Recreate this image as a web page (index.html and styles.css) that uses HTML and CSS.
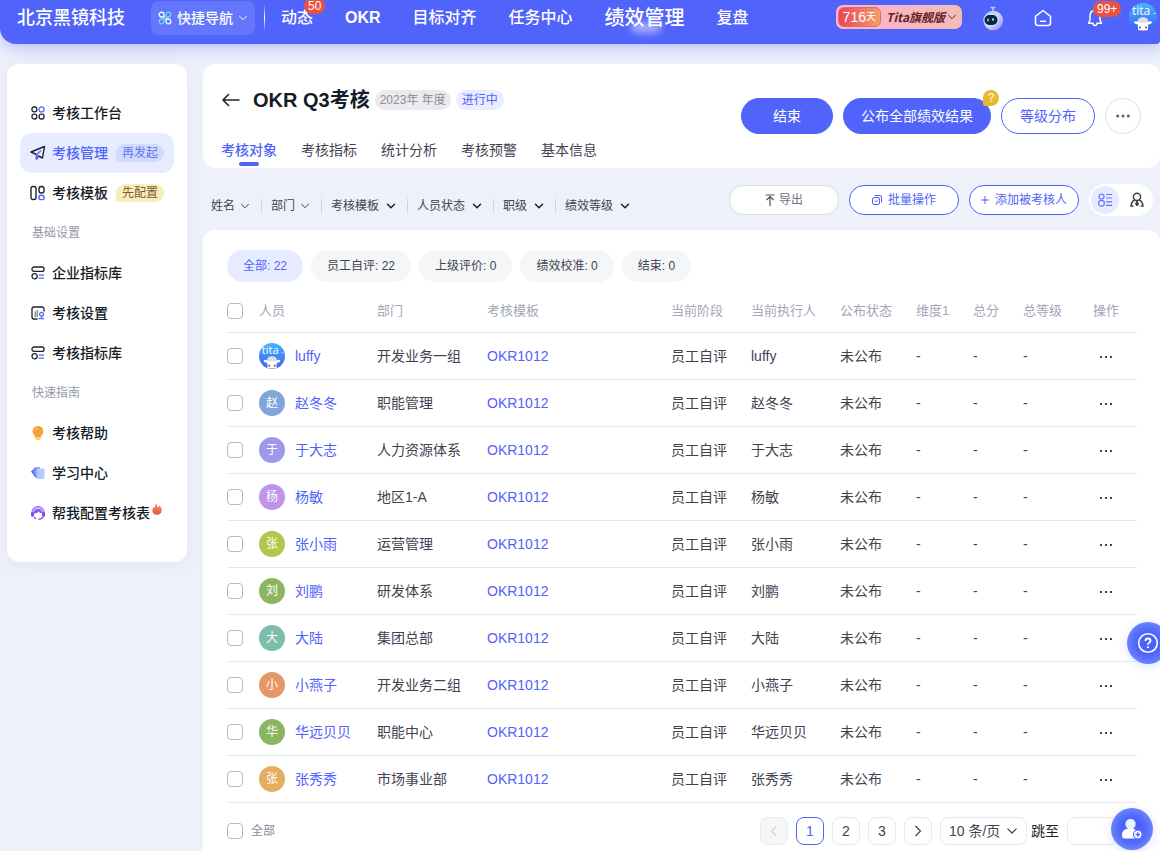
FILE: index.html
```html
<!DOCTYPE html>
<html lang="zh-CN">
<head>
<meta charset="utf-8">
<title>OKR Q3考核</title>
<link rel="stylesheet" href="styles.css">
</head>
<body>
<svg class="defs" aria-hidden="true">
  <defs>
    <linearGradient id="sky" x1="0" y1="0" x2="0" y2="1"><stop offset="0" stop-color="#45b4fb"/><stop offset="1" stop-color="#3a62f5"/></linearGradient>
    <linearGradient id="flame" x1="0" y1="0" x2="0" y2="1"><stop offset="0" stop-color="#f29a5c"/><stop offset="1" stop-color="#ea5140"/></linearGradient>
    <linearGradient id="shell" x1="0" y1="0" x2="1" y2="1"><stop offset="0" stop-color="#8fc2f8"/><stop offset="0.5" stop-color="#d5d3fa"/><stop offset="1" stop-color="#8d8cf2"/></linearGradient>
    <clipPath id="round"><circle cx="14" cy="14" r="14"/></clipPath>
    <symbol id="chevron" viewBox="0 0 10 10"><path d="M1.5 3.2 5 6.7 8.5 3.2" fill="none" stroke="currentColor" stroke-linecap="round" stroke-linejoin="round"/></symbol>
    <symbol id="dots" viewBox="0 0 14 4"><path d="M1 1h2v2H1zM6 1h2v2H6zM11 1h2v2h-2z" fill="currentColor"/></symbol>
    <symbol id="library" viewBox="0 0 14 14"><g fill="none" stroke-width="1.3"><rect x="1" y="1" width="12" height="4.4" rx="2" stroke="#1b2230"/><circle cx="3.6" cy="10.3" r="2.6" stroke="#1b2230"/><path d="M7.6 9.2H13M7.6 12.2H13" stroke="#5468f8"/></g></symbol>
    <symbol id="mascot" viewBox="0 0 28 28"><g clip-path="url(#round)"><rect width="28" height="28" fill="url(#sky)"/><text x="3" y="12" class="mascot-text">tita</text><path d="M24 10.500h3" stroke="#9fd0ff"/><path d="M5 19.500q0-2 4-1 0-4 5-4t5 4q4-1 4 1-1 2-4 2v6H9v-6q-3 0-4-2z" fill="#fff"/><path d="M9 18.500q0-4 5-4t5 4q-2 2-5 1-3 1-5-1z" fill="#dcdde2"/><circle cx="11" cy="24.500" r="1" fill="#5b4a46"/><circle cx="17" cy="24.500" r="1" fill="#5b4a46"/></g></symbol>
  </defs>
</svg>

<header class="topbar">
  <span class="company">北京黑镜科技</span>
  <button class="quick" type="button">
    <svg width="14" height="14" viewBox="0 0 14 14" fill="none" stroke-width="1.3"><path d="M6 3.600A2.400 2.400 0 1 0 3.600 6H6zM8 10.400A2.400 2.400 0 1 0 10.400 8H8z" stroke="#fff"/><path d="M8 3.600A2.400 2.400 0 1 1 10.400 6H8zM6 10.400A2.400 2.400 0 1 1 3.600 8H6z" stroke="#5ee3e8"/></svg>
    快捷导航
    <svg class="ic10"><use href="#chevron"/></svg>
  </button>
  <span class="bar-divider"></span>
  <nav class="mainnav">
    <a href="#">动态<span class="count count-feed">50</span></a>
    <a href="#">OKR</a>
    <a href="#">目标对齐</a>
    <a href="#">任务中心</a>
    <a href="#" class="current" aria-current="page">绩效管理</a>
    <a href="#">复盘</a>
  </nav>
  <div class="tools">
    <button class="plan" type="button"><span class="days">716<small>天</small></span><em>Tita旗舰版</em><svg class="ic10"><use href="#chevron"/></svg></button>
    <button class="tool" type="button" aria-label="智能助手">
      <svg width="22" height="26" viewBox="0 0 22 26"><path d="M8.500 2.500h5M11 2.500v4" stroke="#b9c9fb" stroke-width="1.600"/><circle cx="11.200" cy="15.500" r="9.800" fill="url(#shell)"/><ellipse cx="9" cy="15" rx="7.500" ry="6.600" fill="#c9dcfb"/><rect x="2.500" y="10" width="13" height="10" rx="4.800" fill="#10233f"/><rect x="5" y="13.500" width="2" height="3" rx="1" fill="#4fe3e0"/><rect x="10" y="13" width="2" height="3" rx="1" fill="#4fe3e0"/></svg>
    </button>
    <button class="tool" type="button" aria-label="首页">
      <svg width="18" height="18" viewBox="0 0 18 18" fill="none" stroke="#fff" stroke-width="1.500" stroke-linejoin="round" stroke-linecap="round"><path d="M1.500 7.300 9 1.500l7.500 5.800V14a2.500 2.500 0 0 1-2.500 2.500H4A2.500 2.500 0 0 1 1.500 14zM6.500 12.300h5"/></svg>
    </button>
    <button class="tool" type="button" aria-label="通知">
      <svg width="18" height="18" viewBox="0 0 18 18" fill="none" stroke="#fff" stroke-width="1.500" stroke-linejoin="round" stroke-linecap="round"><path d="M9 1.500C5.600 1.500 4 4 4 7v4L2.500 14.200H7M9 1.500c3.400 0 5 2.500 5 5.500v4l1.500 3.200H11M7 14.200c.2 3 3.800 3 4 0"/></svg>
      <span class="count count-bell">99+</span>
    </button>
    <a href="#" class="me" aria-label="我的"><svg width="28" height="28"><use href="#mascot"/></svg></a>
  </div>
</header>

<div class="layout">
  <aside class="sidebar">
    <a href="#" class="side-item"><svg width="16" height="16" viewBox="0 0 16 16" fill="none" stroke-width="1.300"><rect x="2" y="2" width="4.800" height="4.800" rx="1.800" stroke="#1b2230"/><circle cx="11.500" cy="4.400" r="2.500" stroke="#5468f8"/><rect x="2" y="9.200" width="4.800" height="4.800" rx="2" stroke="#1b2230"/><rect x="9.200" y="9.200" width="4.800" height="4.800" rx="2" stroke="#1b2230"/></svg>考核工作台</a>
    <a href="#" class="side-item active" aria-current="page"><svg width="16" height="16" viewBox="0 0 16 16" fill="none" stroke-width="1.400" stroke-linejoin="round"><path d="M1 7 14.500 1.500 12.500 13 8.500 11 6.500 14V9.500L1 7z" stroke="#1b2230"/><path d="M6.500 14V9.800L11 5.500M8.500 11l-2 3" stroke="#5468f8"/></svg>考核管理<span class="flag flag-blue">再发起</span></a>
    <a href="#" class="side-item"><svg width="16" height="16" viewBox="0 0 16 16" fill="none" stroke-width="1.400"><rect x="1" y="1.500" width="5" height="13" rx="2" stroke="#1b2230"/><rect x="9" y="1.500" width="5" height="6.500" rx="2.300" stroke="#1b2230"/><ellipse cx="11.500" cy="12.400" rx="2.700" ry="2.200" stroke="#5468f8"/></svg>考核模板<span class="flag flag-gold">先配置</span></a>
    <h2 class="side-title">基础设置</h2>
    <a href="#" class="side-item"><svg width="14" height="14"><use href="#library"/></svg>企业指标库</a>
    <a href="#" class="side-item"><svg width="14" height="14" viewBox="0 0 14 14" fill="none" stroke-width="1.300"><path d="M13 5.500V3a2 2 0 0 0-2-2H3a2 2 0 0 0-2 2v8a2 2 0 0 0 2 2h3.500" stroke="#1b2230"/><path d="M3.500 5.500H5V11H3.500zM5.500 4H7v7H5.500z" fill="#8e929b"/><circle cx="10.500" cy="8.300" r="1.900" stroke="#5468f8"/><path d="M10.500 10v2.600M7.500 12.700H13" stroke="#5468f8"/></svg>考核设置</a>
    <a href="#" class="side-item"><svg width="14" height="14"><use href="#library"/></svg>考核指标库</a>
    <h2 class="side-title">快速指南</h2>
    <a href="#" class="side-item"><svg width="14" height="16" viewBox="0 0 14 16"><path d="M3.500 11h7l-1.500 4H5z" fill="#fbd65e"/><path d="M7 1a5.300 5.300 0 0 0-3 9.700V12h6v-1.300A5.300 5.300 0 0 0 7 1z" fill="#f2a43c"/><path d="M4 5.500Q4.500 3.500 6.500 3" stroke="#f9cd86" fill="none"/></svg>考核帮助</a>
    <a href="#" class="side-item"><svg width="16" height="16" viewBox="0 0 16 16"><path d="M1 6.500 5 2.500h3v11L5 12z" fill="#5a6ff8"/><path d="M3.500 6 7 2h3v12H7z" fill="#83a0fb"/><path d="M7 3.500h6q1.500 0 1.500 1.500v7.500q0 1.500-1.500 1.500H7z" fill="#b6c9fd"/></svg>学习中心</a>
    <a href="#" class="side-item"><svg width="16" height="16" viewBox="0 0 16 16"><path d="M2.500 9a5.700 5.700 0 1 1 11 0" fill="none" stroke="#a885f8" stroke-width="2"/><path d="M3.500 8.500Q4 3.500 8 3.500t4.500 5Q9 8 8.500 6.500 7 9 3.500 8.500z" fill="#8b5cf6"/><rect x="1" y="6.800" width="3" height="5" rx="1.500" fill="#7b4df0"/><rect x="12" y="6.800" width="3" height="5" rx="1.500" fill="#7b4df0"/><path d="M13.300 11.500Q12 14.300 8.500 14.300M4 12l2 2" fill="none" stroke="#8b5cf6" stroke-width="1.400"/></svg>帮我配置考核表<svg class="hot" width="10" height="12" viewBox="0 0 10 12"><path d="M4.500 0Q4.500 3 6.500 4.300 7.500 3.500 7 2 10 5 9.600 8 9 11.800 5 11.800T.4 8Q.2 5.500 2 3.500q.2 1.300 1 1.500Q2.700 2 4.500 0z" fill="url(#flame)"/></svg></a>
  </aside>

  <main class="main">
    <section class="heading">
      <div class="heading-left">
        <div class="title-row">
          <button class="back" type="button" aria-label="返回"><svg width="18" height="14" viewBox="0 0 18 14" fill="none" stroke="#1b2230" stroke-width="1.600" stroke-linecap="round" stroke-linejoin="round"><path d="M17 7H1M6.500 1.500 1 7l5.500 5.500"/></svg></button>
          <h1>OKR Q3考核</h1>
          <span class="tag tag-gray">2023年 年度</span>
          <span class="tag tag-blue">进行中</span>
        </div>
        <nav class="tabs">
          <a href="#" class="on" aria-current="page">考核对象</a>
          <a href="#">考核指标</a>
          <a href="#">统计分析</a>
          <a href="#">考核预警</a>
          <a href="#">基本信息</a>
        </nav>
      </div>
      <div class="actions">
        <button class="btn solid wide" type="button">结束</button>
        <button class="btn solid" type="button">公布全部绩效结果<span class="hint">?</span></button>
        <button class="btn line" type="button">等级分布</button>
        <button class="btn more" type="button" aria-label="更多"><svg width="14" height="4" viewBox="0 0 14 4" fill="#5c606b"><circle cx="1.700" cy="2" r="1.500"/><circle cx="7" cy="2" r="1.500"/><circle cx="12.300" cy="2" r="1.500"/></svg></button>
      </div>
    </section>

    <section class="filterbar">
      <div class="filters">
        <button type="button">姓名<svg class="ic10"><use href="#chevron"/></svg></button>
        <button type="button">部门<svg class="ic10"><use href="#chevron"/></svg></button>
        <button type="button">考核模板<svg class="ic10 strong"><use href="#chevron"/></svg></button>
        <button type="button">人员状态<svg class="ic10 strong"><use href="#chevron"/></svg></button>
        <button type="button">职级<svg class="ic10 strong"><use href="#chevron"/></svg></button>
        <button type="button">绩效等级<svg class="ic10 strong"><use href="#chevron"/></svg></button>
      </div>
      <div class="ops">
        <button class="op op-gray" type="button"><svg width="10" height="12" viewBox="0 0 10 12" fill="none" stroke="#4d515c" stroke-width="1.200"><path d="M.5 1h9M5 12V2.500M1.500 6 5 2.500 8.500 6"/></svg>导出</button>
        <button class="op" type="button"><svg class="gap" width="10" height="10" viewBox="0 0 10 10" fill="none" stroke="currentColor"><rect x=".5" y="2.500" width="7" height="7" rx="1.500"/><path d="M2.500.5H8Q9.500.5 9.500 2v5.500M2.500 5.800 3.700 7l2.200-2.300"/></svg>批量操作</button>
        <button class="op" type="button"><svg class="gap" width="8" height="8" viewBox="0 0 8 8" stroke="currentColor"><path d="M4 0v8M0 4h8"/></svg>添加被考核人</button>
        <div class="switch">
          <button type="button" class="picked" aria-label="列表视图"><svg width="14" height="14" viewBox="0 0 14 14" fill="none" stroke="#6272f8" stroke-width="1.200"><circle cx="3.500" cy="3.500" r="2.500"/><circle cx="3.500" cy="10.300" r="2.900"/><path d="M8 1.500h6M8 5h6M8 8.800h6M8 12.300h6"/></svg></button>
          <button type="button" aria-label="人员视图"><svg width="14" height="16" viewBox="0 0 14 16" fill="none" stroke="#3c404b" stroke-width="1.500"><circle cx="7" cy="4.800" r="3.600"/><path d="M4.800 8Q1.500 9.500 1 14h2.500M9.200 8q3.300 1.500 3.800 6h-2.500"/><path d="M7 8.500 5.500 12 7 14l1.500-2z" fill="#3c404b" stroke-width="1"/></svg></button>
        </div>
      </div>
    </section>

    <section class="panel">
      <div class="chips">
        <button type="button" class="chip chip-on">全部: 22</button>
        <button type="button" class="chip">员工自评: 22</button>
        <button type="button" class="chip">上级评价: 0</button>
        <button type="button" class="chip">绩效校准: 0</button>
        <button type="button" class="chip">结束: 0</button>
      </div>

      <table class="people">
        <colgroup><col class="c-check"><col class="c-person"><col class="c-dept"><col><col class="c-stage"><col class="c-exec"><col class="c-status"><col class="c-dim"><col class="c-total"><col class="c-grade"><col class="c-op"></colgroup>
        <thead>
          <tr><th><input type="checkbox" aria-label="全选"></th><th>人员</th><th>部门</th><th>考核模板</th><th>当前阶段</th><th>当前执行人</th><th>公布状态</th><th>维度1</th><th>总分</th><th>总等级</th><th>操作</th></tr>
        </thead>
        <tbody>
          <tr><td><input type="checkbox" aria-label="luffy"></td><td><a href="#" class="person"><svg width="26" height="26"><use href="#mascot"/></svg>luffy</a></td><td>开发业务一组</td><td><a href="#">OKR1012</a></td><td>员工自评</td><td>luffy</td><td>未公布</td><td>-</td><td>-</td><td>-</td><td><button class="row-more" type="button" aria-label="更多"><svg width="14" height="4"><use href="#dots"/></svg></button></td></tr>
          <tr><td><input type="checkbox" aria-label="赵冬冬"></td><td><a href="#" class="person"><span class="face sky">赵</span>赵冬冬</a></td><td>职能管理</td><td><a href="#">OKR1012</a></td><td>员工自评</td><td>赵冬冬</td><td>未公布</td><td>-</td><td>-</td><td>-</td><td><button class="row-more" type="button" aria-label="更多"><svg width="14" height="4"><use href="#dots"/></svg></button></td></tr>
          <tr><td><input type="checkbox" aria-label="于大志"></td><td><a href="#" class="person"><span class="face violet">于</span>于大志</a></td><td>人力资源体系</td><td><a href="#">OKR1012</a></td><td>员工自评</td><td>于大志</td><td>未公布</td><td>-</td><td>-</td><td>-</td><td><button class="row-more" type="button" aria-label="更多"><svg width="14" height="4"><use href="#dots"/></svg></button></td></tr>
          <tr><td><input type="checkbox" aria-label="杨敏"></td><td><a href="#" class="person"><span class="face orchid">杨</span>杨敏</a></td><td>地区1-A</td><td><a href="#">OKR1012</a></td><td>员工自评</td><td>杨敏</td><td>未公布</td><td>-</td><td>-</td><td>-</td><td><button class="row-more" type="button" aria-label="更多"><svg width="14" height="4"><use href="#dots"/></svg></button></td></tr>
          <tr><td><input type="checkbox" aria-label="张小雨"></td><td><a href="#" class="person"><span class="face lime">张</span>张小雨</a></td><td>运营管理</td><td><a href="#">OKR1012</a></td><td>员工自评</td><td>张小雨</td><td>未公布</td><td>-</td><td>-</td><td>-</td><td><button class="row-more" type="button" aria-label="更多"><svg width="14" height="4"><use href="#dots"/></svg></button></td></tr>
          <tr><td><input type="checkbox" aria-label="刘鹏"></td><td><a href="#" class="person"><span class="face green">刘</span>刘鹏</a></td><td>研发体系</td><td><a href="#">OKR1012</a></td><td>员工自评</td><td>刘鹏</td><td>未公布</td><td>-</td><td>-</td><td>-</td><td><button class="row-more" type="button" aria-label="更多"><svg width="14" height="4"><use href="#dots"/></svg></button></td></tr>
          <tr><td><input type="checkbox" aria-label="大陆"></td><td><a href="#" class="person"><span class="face teal">大</span>大陆</a></td><td>集团总部</td><td><a href="#">OKR1012</a></td><td>员工自评</td><td>大陆</td><td>未公布</td><td>-</td><td>-</td><td>-</td><td><button class="row-more" type="button" aria-label="更多"><svg width="14" height="4"><use href="#dots"/></svg></button></td></tr>
          <tr><td><input type="checkbox" aria-label="小燕子"></td><td><a href="#" class="person"><span class="face coral">小</span>小燕子</a></td><td>开发业务二组</td><td><a href="#">OKR1012</a></td><td>员工自评</td><td>小燕子</td><td>未公布</td><td>-</td><td>-</td><td>-</td><td><button class="row-more" type="button" aria-label="更多"><svg width="14" height="4"><use href="#dots"/></svg></button></td></tr>
          <tr><td><input type="checkbox" aria-label="华远贝贝"></td><td><a href="#" class="person"><span class="face green">华</span>华远贝贝</a></td><td>职能中心</td><td><a href="#">OKR1012</a></td><td>员工自评</td><td>华远贝贝</td><td>未公布</td><td>-</td><td>-</td><td>-</td><td><button class="row-more" type="button" aria-label="更多"><svg width="14" height="4"><use href="#dots"/></svg></button></td></tr>
          <tr><td><input type="checkbox" aria-label="张秀秀"></td><td><a href="#" class="person"><span class="face amber">张</span>张秀秀</a></td><td>市场事业部</td><td><a href="#">OKR1012</a></td><td>员工自评</td><td>张秀秀</td><td>未公布</td><td>-</td><td>-</td><td>-</td><td><button class="row-more" type="button" aria-label="更多"><svg width="14" height="4"><use href="#dots"/></svg></button></td></tr>
        </tbody>
      </table>

      <footer class="table-foot">
        <label class="all"><input type="checkbox">全部</label>
        <div class="pager">
          <button type="button" class="page" disabled aria-label="上一页"><svg width="8" height="12" viewBox="0 0 8 12" fill="none" stroke="currentColor"><path d="M6.500 1 1.500 6l5 5"/></svg></button>
          <button type="button" class="page page-on" aria-current="page">1</button>
          <button type="button" class="page">2</button>
          <button type="button" class="page">3</button>
          <button type="button" class="page" aria-label="下一页"><svg width="8" height="12" viewBox="0 0 8 12" fill="none" stroke="currentColor" stroke-width="1.200"><path d="m1.500 1 5 5-5 5"/></svg></button>
          <span class="size"><select aria-label="每页条数"><option>10 条/页</option></select><svg width="12" height="12" viewBox="0 0 10 10"><use href="#chevron"/></svg></span>
          <label class="jump">跳至<input type="text"></label>
        </div>
      </footer>
    </section>
  </main>
</div>

<button class="float float-help" type="button" aria-label="帮助"><svg width="22" height="22" viewBox="0 0 22 22" fill="none" stroke="#fff" stroke-width="1.600"><circle cx="11" cy="11" r="9.300"/><path d="M8.500 9Q8.500 6.500 11 6.500T13.500 8.800Q13.500 10 12.200 10.700 11 11.300 11 12.700M11 14.200v1.800" stroke-width="1.800"/></svg></button>
<button class="float float-invite" type="button" aria-label="邀请成员"><svg width="22" height="22" viewBox="0 0 22 22"><circle cx="9.500" cy="6" r="5.200" fill="#e9f0ff"/><path d="M1 17.500q0-6.500 6-7h5q4 1 5 5v5H3.500Q1 20.500 1 17.500z" fill="#fff"/><circle cx="16.800" cy="16.500" r="4.300" fill="#fff" stroke="#5a78fb" stroke-width="1.200"/><path d="M16.800 14.300v4.400M14.600 16.500H19" stroke="#4f63f8" stroke-width="1.500"/></svg></button>
</body>
</html>
```
FILE: styles.css
```css
:root {
  --brand: #5063fa;
  --ink: #141c28;
  --text: #3f4350;
  --muted: #9499a6;
  --line: #e7e9f0;
}

* { box-sizing: border-box; }

body {
  margin: 0;
  min-height: 100vh;
  display: flex;
  flex-direction: column;
  overflow-x: hidden;
  background: #eef1f9;
  color: var(--text);
  font: 14px/20px "Liberation Sans", "Noto Sans CJK SC", sans-serif;
}

a { color: inherit; text-decoration: none; }
button, input, select { font: inherit; color: inherit; }
button { display: inline-flex; align-items: center; justify-content: center; padding: 0; border: 0; background: none; white-space: nowrap; cursor: pointer; }
svg { flex: none; display: block; }
h1, h2 { margin: 0; }

.defs { position: absolute; width: 0; height: 0; }
.ic10 { width: 10px; height: 10px; }
.strong { margin-left: 2px; color: #1b2230; stroke-width: 1.5px; }
.mascot-text { fill: #fff; font: 12px "Open Sans", sans-serif; }

/* Top bar */
.topbar {
  display: flex;
  align-items: center;
  height: 44px;
  padding: 0 3px 8px 17px;
  background: var(--brand);
  border-radius: 0 0 4px 16px;
  box-shadow: 0 4px 16px rgba(80, 99, 250, 0.35);
  color: #fff;
}
.company { font-size: 18px; font-weight: 500; white-space: nowrap; }
.quick { gap: 5px; height: 34px; margin-left: 26px; padding: 0 7px 0 7px; border-radius: 8px; background: #6476fb; font-weight: 500; }
.bar-divider { width: 1px; height: 28px; margin: 0 16px 0 9px; background: linear-gradient(transparent, #fff, transparent); }
.mainnav { display: flex; align-items: center; gap: 32px; font-size: 16px; font-weight: 600; white-space: nowrap; }
.mainnav a { position: relative; font-weight: 500; }
.mainnav a:nth-child(2) { font-weight: 700; }
.mainnav .current { font-size: 20px; }
.mainnav .current::after { content: ""; position: absolute; left: 26px; top: 15px; width: 30px; height: 9px; border-radius: 5px; background: rgba(255, 255, 255, 0.6); filter: blur(4px); }
.count { position: absolute; height: 16px; padding: 0 4px; border-radius: 8px; background: #ea5140; color: #fff; font-size: 12px; font-weight: 400; line-height: 16px; }
.count-feed { left: 23px; top: -10px; }
.count-bell { left: 7px; top: -8px; }
.tools { display: flex; align-items: center; margin-left: auto; }
.plan { height: 24px; margin: 0 20px 2px 0; padding: 0 5px 0 2px; border-radius: 7px; background: linear-gradient(90deg, #f9b3cf, #f3bcb8); color: #6c2020; font-size: 12px; }
.plan em { margin: 0 2px 0 5px; font-family: "Noto Sans CJK SC", sans-serif; font-weight: 700; }
.days { display: flex; align-items: center; height: 20px; padding: 0 4px; border-radius: 6px; background: linear-gradient(90deg, #e8475c, #f0a065); border: 1px solid #ea6a62; color: #fff; font-size: 14px; }
.days small { font-size: 10px; }
.tool { position: relative; margin-right: 30px; }
.tool:last-of-type { margin-right: 25px; }
.tool + .tool + .tool { margin-left: 4px; }
.me { margin-bottom: 2px; }

/* Page grid */
.layout { flex: 1; display: grid; grid-template-columns: 180px minmax(0, 1fr); gap: 16px; padding: 20px 0 0 7px; }

.sidebar { align-self: start; padding: 29px 13px; border-radius: 12px; background: #fff; box-shadow: 0 4px 16px rgba(90, 110, 200, 0.08); }
.side-item { display: flex; align-items: center; gap: 6px; height: 40px; padding-left: 10px; border-radius: 12px; color: var(--ink); font-weight: 500; white-space: nowrap; }
.side-item > svg[width="14"] { margin: 0 1px; }
.side-item.active { background: #e7ebff; color: var(--brand); }
.side-title { padding-left: 12px; color: var(--muted); font-size: 12px; font-weight: 400; line-height: 40px; }
.flag { height: 18px; margin-left: 2px; padding: 0 6px; border-radius: 9px 9px 9px 2px; font-size: 12px; font-weight: 400; line-height: 18px; }
.flag-blue { background: #d2dafe; color: #6173f3; }
.flag-gold { background: #f8eeb9; color: #7c5a33; }
.hot { align-self: flex-start; margin: 10px 0 0 -4px; }

.main { display: flex; flex-direction: column; }

/* Heading card */
.heading { display: flex; justify-content: space-between; align-items: center; height: 104px; padding: 0 19px 0 18px; border-radius: 12px; background: #fff; }
.title-row { display: flex; align-items: center; height: 28px; margin: 14px 0 26px; white-space: nowrap; }
.back { margin: 0 13px 0 1px; }
h1 { margin-right: 5px; color: var(--ink); font-size: 20px; line-height: 28px; }
.tag { height: 20px; padding: 0 5px; border-radius: 10px; font-size: 12px; line-height: 20px; }
.tag-gray { margin-right: 5px; background: #ebebed; color: #8b909c; }
.tag-blue { padding: 0 6px; background: #eaecff; color: var(--brand); }
.tabs { display: flex; gap: 24px; white-space: nowrap; }
.tabs a { position: relative; }
.tabs .on { color: var(--brand); font-weight: 500; }
.tabs .on::after { content: ""; position: absolute; left: 18px; top: 22px; width: 20px; height: 4px; border-radius: 2px; background: var(--brand); }
.actions { display: flex; gap: 10px; }
.btn { position: relative; height: 36px; padding: 0 18px; border: 1px solid var(--brand); border-radius: 18px; }
.solid { background: var(--brand); color: #fff; padding: 0 17px; }
.wide { padding: 0 31px; }
.line { background: #fff; color: var(--brand); }
.more { width: 36px; padding: 0; border-color: #dcdee6; }
.hint { position: absolute; right: -9px; top: -9px; width: 16px; height: 16px; border-radius: 8px 8px 8px 2px; background: #e8b92c; font-size: 12px; line-height: 16px; }

/* Filters */
.filterbar { display: flex; justify-content: space-between; align-items: center; height: 62px; padding: 2px 7px 0 8px; font-size: 12px; }
.filters { display: flex; margin-top: 12px; }
.filters button { gap: 5px; padding-right: 11px; }
.filters button + button { padding-left: 9px; border-left: 1px solid; border-image: linear-gradient(transparent, #c4c8d4, transparent) 1; }
.ops { display: flex; align-items: center; gap: 10px; }
.op { gap: 4px; width: 110px; height: 30px; border: 1px solid var(--brand); border-radius: 15px; background: #fff; color: var(--brand); }
.op .gap { margin-right: 2px; }
.op-gray { border-color: #dcdee6; color: #6f7480; }
.switch { display: flex; gap: 4px; height: 32px; padding: 2px; border-radius: 16px; background: #fff; }
.switch button { width: 28px; height: 28px; border-radius: 14px; }
.switch .picked { background: #e9eaff; }

/* Table panel */
.panel { flex: 1; padding: 20px 23px 6px 24px; border-radius: 12px 12px 0 0; background: #fff; }
.chips { display: flex; gap: 8px; }
.chip { height: 32px; padding: 0 16px; border-radius: 16px; background: #f5f6f8; font-size: 12px; }
.chip-on { background: #e7ebff; color: var(--brand); }

.people { width: 100%; margin-top: 8px; border-collapse: collapse; table-layout: fixed; }
.people th, .people td { height: 47px; padding: 0; border-bottom: 1px solid var(--line); text-align: left; white-space: nowrap; }
.people th { height: 42px; color: #a2a7b4; font-size: 13px; font-weight: 400; }
.people td a { color: var(--brand); }
.c-check { width: 32px; }
.c-person { width: 118px; }
.c-dept { width: 110px; }
.c-stage { width: 80px; }
.c-exec { width: 89px; }
.c-status { width: 76px; }
.c-dim { width: 57px; }
.c-total { width: 50px; }
.c-grade { width: 70px; }
.c-op { width: 44px; }
.person { display: flex; align-items: center; gap: 10px; }
.face { width: 26px; height: 26px; border-radius: 13px; color: #fff; font-size: 12px; line-height: 26px; text-align: center; }
.sky { background: #7fa7db; }
.violet { background: #9f98e9; }
.orchid { background: #bd94e9; }
.lime { background: #b0c74b; }
.green { background: #8bb65f; }
.teal { background: #7dbdae; }
.coral { background: #e69766; }
.amber { background: #e5ad61; }
.row-more { width: 26px; height: 20px; }
input[type="checkbox"] { appearance: none; display: block; width: 16px; height: 16px; margin: 0; border: 1px solid #b3b9cc; border-radius: 4px; background: #fff; }

.table-foot { display: flex; align-items: center; justify-content: space-between; padding-top: 14px; }
.all { display: flex; align-items: center; gap: 8px; color: #858a97; font-size: 12px; }
.pager { display: flex; align-items: center; gap: 8px; }
.page { width: 28px; height: 28px; border: 1px solid var(--line); border-radius: 8px; background: #fff; }
.page:disabled { background: #f5f6f8; color: #b6bac6; }
.page-on { border-color: var(--brand); color: var(--brand); }
.size { position: relative; margin-right: -4px; }
.size select { display: block; appearance: none; height: 28px; padding: 0 25px 0 8px; border: 1px solid var(--line); border-radius: 8px; background: #fff; }
.size svg { position: absolute; right: 9px; top: 8px; pointer-events: none; }
.jump { display: flex; align-items: center; gap: 8px; margin-right: 20px; color: #1b1d22; white-space: nowrap; }
.jump input { width: 50px; height: 28px; border: 1px solid var(--line); border-radius: 8px; background: #fff; }

/* Floating buttons */
.float { position: fixed; width: 42px; height: 42px; border-radius: 21px; background: radial-gradient(circle, #4b62fa 35%, #5f78fb 60%, #92a6fb 100%); box-shadow: 0 2px 10px rgba(80, 99, 250, 0.2); }
.float-help { right: -9px; bottom: 187px; }
.float-invite { right: 7px; bottom: 1px; }
```
